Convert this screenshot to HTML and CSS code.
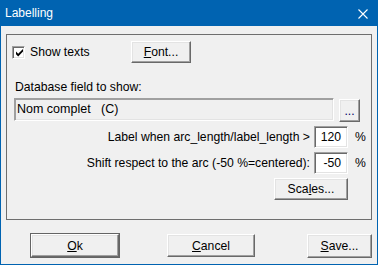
FILE: index.html
```html
<!DOCTYPE html>
<html lang="en">
<head>
  <meta charset="UTF-8">
  <title>Labelling</title>
  <link rel="stylesheet" href="styles.css">
</head>
<body>
<div class="window">
  <div class="titlebar">
    <span class="title">Labelling</span>
    <svg class="close" width="10" height="10" viewBox="0 0 10 10">
      <path d="M0.5 0.5 L9.5 9.5 M9.5 0.5 L0.5 9.5" stroke="#fff" stroke-width="1.1" fill="none"/>
    </svg>
  </div>

  <div class="group">
    <div class="row-top">
      <label class="check-label">
        <span class="check">
          <svg width="9" height="9" viewBox="0 0 9 9">
            <path d="M1 3.5 L3.2 5.7 L8 1 L8 3.6 L3.2 8.4 L1 6.2 Z" fill="#000"/>
          </svg>
        </span>
        Show texts
      </label>
      <button class="btn btn-font"><u>F</u>ont...</button>
    </div>

    <div class="field-label">Database field to show:</div>
    <div class="field-row">
      <div class="field">Nom complet   (C)</div>
      <button class="btn btn-dots">...</button>
    </div>

    <div class="param-row">
      <span>Label when arc_length/label_length &gt;</span>
      <div class="num">120</div>
      <span class="pct">%</span>
    </div>
    <div class="param-row">
      <span>Shift respect to the arc (-50 %=centered):</span>
      <div class="num">-50</div>
      <span class="pct">%</span>
    </div>
    <div class="scales-row">
      <button class="btn btn-scales">Sca<u>l</u>es...</button>
    </div>
  </div>

  <div class="actions">
    <button class="btn btn-main default"><u>O</u>k</button>
    <button class="btn btn-main btn-cancel"><u>C</u>ancel</button>
    <button class="btn btn-save"><u>S</u>ave...</button>
  </div>
</div>
</body>
</html>
```

FILE: styles.css
```css
body { margin: 0; font-family: "Liberation Sans", Arial, sans-serif; font-size: 12.2px; color: #000; }
.window { width: 378px; height: 265px; box-sizing: border-box; border: 1px solid #0063b1; border-top: 0; background: #f0f0f0; }
.titlebar { height: 26px; margin: 0 -1px; background: #0063b1; display: flex; align-items: center; justify-content: space-between; padding: 0 10px 0 5px; }
.title { color: #fff; font-size: 12px; }
.close { display: block; margin-top: 1px; }

.group { margin: 8px 0 0 5px; width: 366px; height: 186px; box-sizing: border-box; border: 1px solid #6e6e6e; }

.row-top { display: flex; align-items: center; height: 22px; margin-top: 6px; }
.check-label { display: flex; align-items: center; width: 119px; padding-left: 5px; gap: 5px; }
.check { width: 13px; height: 13px; box-sizing: border-box; background: #fff; border-top: 1px solid #a0a0a0; border-left: 1px solid #a0a0a0; border-right: 1px solid #fff; border-bottom: 1px solid #fff; box-shadow: inset 1px 1px #696969, inset -1px -1px #e3e3e3; display: flex; align-items: center; justify-content: center; padding: 1px 0 0 1px; }
.check svg { display: block; }

.btn { font-family: "Liberation Sans", Arial, sans-serif; font-size: 12.2px; color: #000; background: #f0f0f0; box-sizing: border-box; padding: 0; border-top: 1px solid #fff; border-left: 1px solid #fff; border-right: 1px solid #696969; border-bottom: 1px solid #696969; box-shadow: inset -1px -1px #a0a0a0, inset 1px 1px #e3e3e3; }
.btn-font { width: 60px; height: 22px; }

.field-label { margin: 17px 0 0 8px; line-height: 14px; }
.field-row { display: flex; margin: 4px 0 0 7px; }
.field { width: 320px; height: 23px; box-sizing: border-box; padding: 3px 0 0 2px; font-size: 12.5px; white-space: pre; line-height: 14px; background: #f0f0f0; border-top: 1px solid #a0a0a0; border-left: 1px solid #a0a0a0; border-right: 1px solid #fff; border-bottom: 1px solid #fff; box-shadow: inset 1px 1px #a0a0a0, inset -1px -1px #e3e3e3; }
.btn-dots { width: 21px; height: 23px; margin: 1px 0 0 5px; line-height: 10px; color: #000066; }

.param-row { display: flex; align-items: center; justify-content: flex-end; height: 22px; margin-top: 4px; padding-right: 1px; }
.param-row:first-of-type { margin-top: 16px; }
.param-row span:first-child { margin-right: 4px; }
.num { width: 34px; height: 22px; box-sizing: border-box; background: #fff; text-align: right; padding: 3px 6px 0 0; line-height: 14px; border-top: 1px solid #a0a0a0; border-left: 1px solid #a0a0a0; border-right: 1px solid #fff; border-bottom: 1px solid #fff; box-shadow: inset 1px 1px #696969, inset -1px -1px #e3e3e3; }
.pct { width: 15px; margin-left: 7px; }

.scales-row { display: flex; justify-content: flex-end; margin-top: 4px; padding-right: 23px; }
.btn-scales { width: 74px; height: 22px; }

.actions { display: flex; align-items: flex-start; margin-top: 14px; padding-left: 30px; }
.btn-main { width: 88px; height: 23px; }
.btn-cancel { margin-left: 48px; }
.btn-save { width: 65px; height: 24px; margin-left: 52px; }
.default { outline: 1px solid #646464; outline-offset: 0; border-color: #fff #696969 #696969 #fff; }
u { text-decoration: underline; text-underline-offset: 1px; }
```
